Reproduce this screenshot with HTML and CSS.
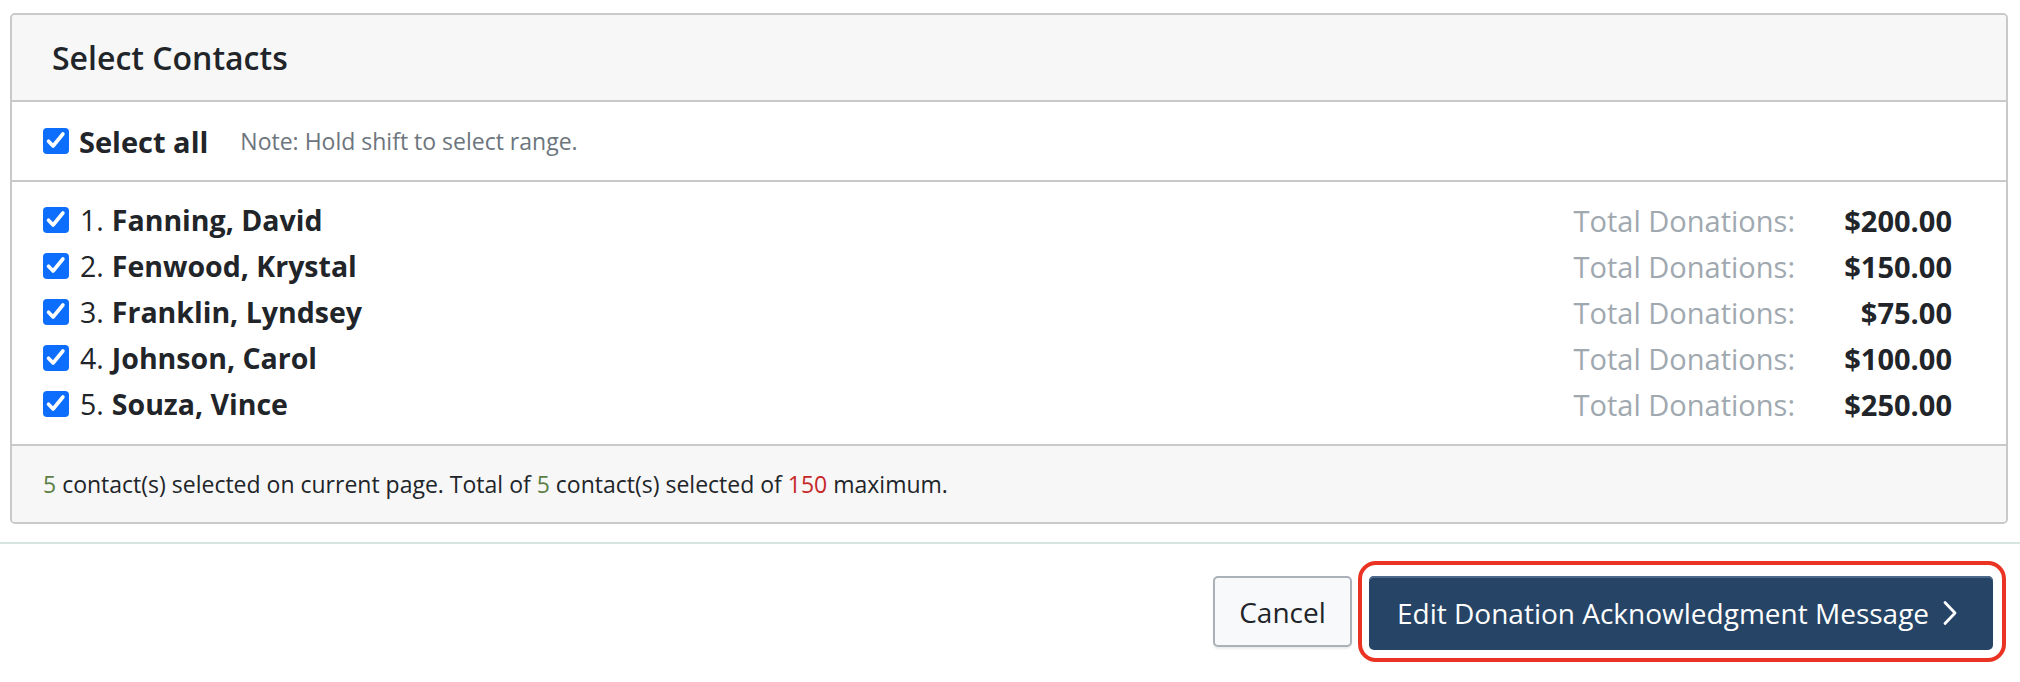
FILE: index.html
```html
<!DOCTYPE html>
<html lang="en">
<head>
<meta charset="utf-8">
<title>Select Contacts</title>
<link rel="stylesheet" href="styles.css">
</head>
<body>
<div class="page">
  <section class="card">
    <header class="card-header">
      <h2 class="title">Select Contacts</h2>
    </header>
    <div class="select-all">
      <span class="check"><svg viewBox="0 0 26 26"><path d="M5.5 13.2l4.6 4.8 9.8-12"/></svg></span>
      <span class="select-all-label">Select all</span>
      <span class="note">Note: Hold shift to select range.</span>
    </div>
    <ul class="list">
      <li class="row">
        <div class="who"><span class="check"><svg viewBox="0 0 26 26"><path d="M5.5 13.2l4.6 4.8 9.8-12"/></svg></span><span class="num">1.</span><b class="name">Fanning, David</b></div>
        <div class="don"><span class="don-label">Total Donations:</span><b class="amount">$200.00</b></div>
      </li>
      <li class="row">
        <div class="who"><span class="check"><svg viewBox="0 0 26 26"><path d="M5.5 13.2l4.6 4.8 9.8-12"/></svg></span><span class="num">2.</span><b class="name">Fenwood, Krystal</b></div>
        <div class="don"><span class="don-label">Total Donations:</span><b class="amount">$150.00</b></div>
      </li>
      <li class="row">
        <div class="who"><span class="check"><svg viewBox="0 0 26 26"><path d="M5.5 13.2l4.6 4.8 9.8-12"/></svg></span><span class="num">3.</span><b class="name">Franklin, Lyndsey</b></div>
        <div class="don"><span class="don-label">Total Donations:</span><b class="amount">$75.00</b></div>
      </li>
      <li class="row">
        <div class="who"><span class="check"><svg viewBox="0 0 26 26"><path d="M5.5 13.2l4.6 4.8 9.8-12"/></svg></span><span class="num">4.</span><b class="name">Johnson, Carol</b></div>
        <div class="don"><span class="don-label">Total Donations:</span><b class="amount">$100.00</b></div>
      </li>
      <li class="row">
        <div class="who"><span class="check"><svg viewBox="0 0 26 26"><path d="M5.5 13.2l4.6 4.8 9.8-12"/></svg></span><span class="num">5.</span><b class="name">Souza, Vince</b></div>
        <div class="don"><span class="don-label">Total Donations:</span><b class="amount">$250.00</b></div>
      </li>
    </ul>
    <footer class="card-footer">
      <span class="green">5</span>&nbsp;contact(s) selected on current page. Total of&nbsp;<span class="green">5</span>&nbsp;contact(s) selected of&nbsp;<span class="red">150</span>&nbsp;maximum.
    </footer>
  </section>
</div>
<hr class="sep">
<div class="actions">
  <button class="btn btn-cancel" type="button">Cancel</button>
  <div class="highlight">
    <button class="btn btn-primary" type="button">Edit Donation Acknowledgment Message<svg class="chev" viewBox="0 0 14 26"><path d="M2 2.5l10 10.5-10 10.5"/></svg></button>
  </div>
</div>
</body>
</html>
```

FILE: styles.css
```css
* { box-sizing: border-box; }

html, body {
  margin: 0;
  padding: 0;
  background: #ffffff;
  font-family: "Open Sans", "Noto Sans", "Liberation Sans", sans-serif;
  color: #212529;
}

.page {
  padding: 13px 12px 0 10px;
}

.card {
  border: 2px solid #c9c9c9;
  border-radius: 5px;
  overflow: hidden;
}

.card-header {
  height: 87px;
  background: #f7f7f7;
  border-bottom: 2px solid #c9c9c9;
  display: flex;
  align-items: center;
  padding: 0 40px;
}

.title {
  margin: 0;
  font-size: 32px;
  font-weight: 600;
  color: #212529;
}

.select-all {
  height: 80px;
  border-bottom: 2px solid #c9c9c9;
  display: flex;
  align-items: center;
  padding: 0 31px;
}

.check {
  width: 26px;
  height: 26px;
  border-radius: 4px;
  background: #0d6efd;
  display: inline-flex;
  align-items: center;
  justify-content: center;
  flex: none;
}

.check svg {
  width: 26px;
  height: 26px;
  fill: none;
  stroke: #ffffff;
  stroke-width: 3.6;
  stroke-linecap: round;
  stroke-linejoin: round;
}

.select-all-label {
  margin-left: 10px;
  font-size: 29px;
  font-weight: 700;
}

.note {
  margin-left: 32px;
  font-size: 23px;
  color: #6c757d;
}

.list {
  list-style: none;
  margin: 0;
  padding: 15px 54px 17px 31px;
  border-bottom: 2px solid #c9c9c9;
}

.row {
  height: 46px;
  display: flex;
  align-items: center;
  justify-content: space-between;
}

.who {
  display: flex;
  align-items: center;
  font-size: 28.5px;
}

.num {
  margin-left: 11px;
  margin-right: 8px;
}

.name {
  font-weight: 700;
}

.don {
  display: flex;
  align-items: center;
  font-size: 29px;
}

.don-label {
  color: #a0a8b0;
}

.amount {
  width: 157px;
  text-align: right;
  font-weight: 700;
}

.card-footer {
  height: 76px;
  background: #f7f7f7;
  display: flex;
  align-items: center;
  padding: 0 31px;
  font-size: 23px;
  color: #212529;
}

.green { color: #5b7f45; }
.red { color: #c62828; }

.sep {
  margin: 18px 0 0 0;
  border: 0;
  height: 2px;
  background: #d6e6de;
}

.actions {
  display: flex;
  justify-content: flex-end;
  align-items: center;
  padding: 17px 14px 0 0;
  gap: 6px;
}

.btn {
  font-family: inherit;
  font-size: 28px;
  cursor: pointer;
  display: inline-flex;
  align-items: center;
}

.btn-cancel {
  width: 139px;
  height: 71px;
  justify-content: center;
  background: #f8f9fa;
  border: 2px solid #aab1b8;
  border-radius: 5px;
  color: #212529;
  box-shadow: 0 2px 2px rgba(0, 0, 0, 0.08);
  padding: 0;
}

.highlight {
  border: 4px solid #ea3323;
  border-radius: 18px;
  padding: 11px 9px 8px 7px;
}

.btn-primary {
  width: 624px;
  height: 74px;
  background: #264466;
  color: #ffffff;
  border: 0;
  border-radius: 5px;
  box-shadow: inset 0 2px 0 #4d6a8c;
  padding: 0 26px 0 28px;
  gap: 14px;
}

.chev {
  width: 14px;
  height: 26px;
  fill: none;
  stroke: #ffffff;
  stroke-width: 2.8;
  stroke-linecap: round;
  stroke-linejoin: round;
}
```
